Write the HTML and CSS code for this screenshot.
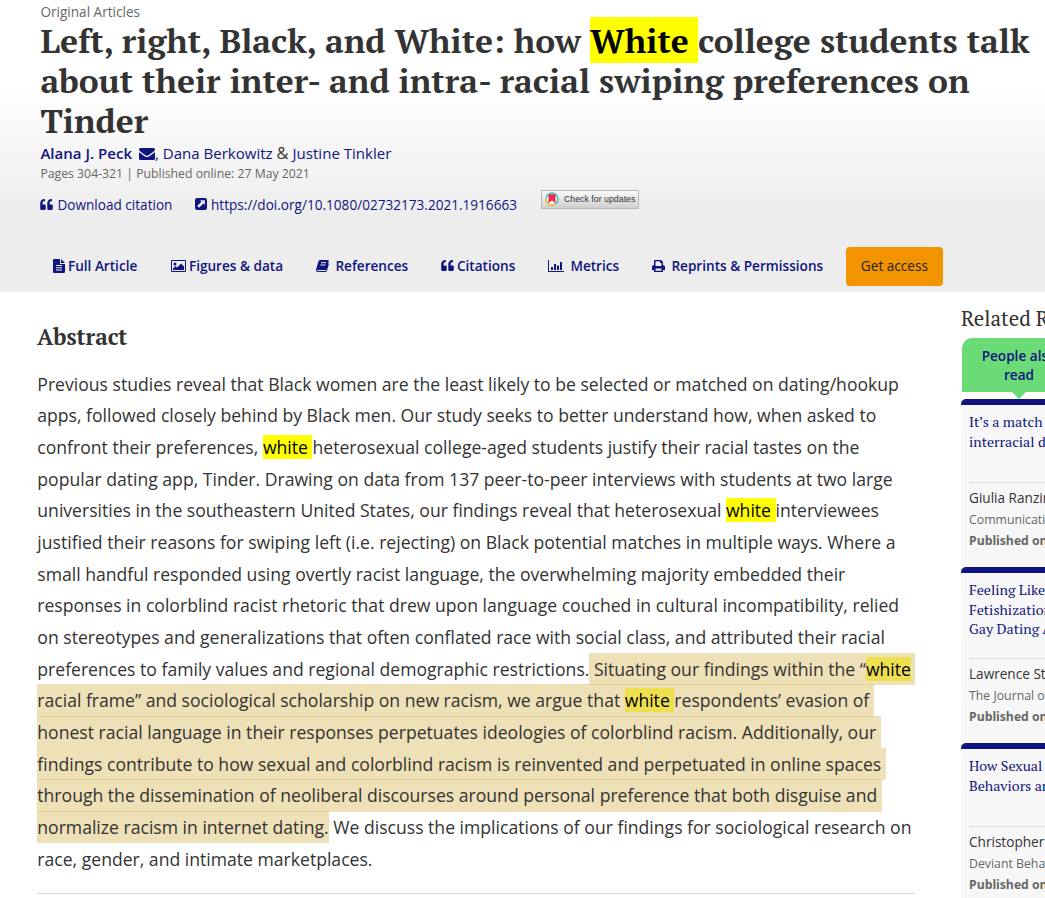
FILE: index.html
```html
<!DOCTYPE html>
<html lang="en">
  <head>
    <meta charset="utf-8">
    <title>Left, right, Black, and White</title>
    <link rel="stylesheet" href="styles.css">
  </head>
  <body>
  <svg class="sprite">
      <symbol id="quote" viewBox="0 32 512 448">
          <path d="M464 256h-80v-64c0-35.300 28.700-64 64-64h8c13.300 0 24-10.700 24-24V56c0-13.300-10.700-24-24-24h-8c-88.400 0-160 71.600-160 160v240c0 26.500 21.500 48 48 48h128c26.500 0 48-21.500 48-48V304c0-26.500-21.500-48-48-48zm-288 0H96v-64c0-35.300 28.700-64 64-64h8c13.300 0 24-10.700 24-24V56c0-13.300-10.700-24-24-24h-8C71.600 32 0 103.600 0 192v240c0 26.500 21.500 48 48 48h128c26.500 0 48-21.500 48-48V304c0-26.500-21.500-48-48-48z"/>
      </symbol>
  </svg>

  <div class="header">
      <div class="section">Original Articles</div>
      <h1 class="title">
          <span class="line">Left, right, Black, and White: how <mark>White </mark>college students talk</span>
          <span class="line">about their inter- and intra- racial swiping preferences on</span>
          <span class="line">Tinder</span>
      </h1>
      <div class="authors">
          <a class="main">Alana J. Peck</a>
          <svg class="mail" width="16" height="12" viewBox="0 0 16 12"><path d="M1.500 0h13Q16 0 16 1.500 16 2.600 14.500 3.700L9.500 7.200Q8 8.200 6.500 7.200L1.500 3.700Q0 2.600 0 1.500 0 0 1.500 0zM0 4.200l6 4.200q2 1.400 4 0l6-4.200v6.300q0 1.500-1.500 1.500h-13Q0 12 0 10.500z"/></svg><a>, Dana Berkowitz</a> <span class="amp">&amp;</span> <a>Justine Tinkler</a>
      </div>
      <div class="pages">Pages 304-321 | Published online: 27 May 2021</div>
      <div class="links">
          <a class="cite"><svg width="13" height="11"><use href="#quote"/></svg>Download citation</a>
          <a class="doi"><svg width="12" height="12" viewBox="0 0 12 12"><path fill-rule="evenodd" d="M2.200 0h7.600Q12 0 12 2.200v7.600q0 2.200-2.200 2.200H2.200Q0 12 0 9.800V2.200Q0 0 2.200 0zM5 2.300l1.400 1.400-4.200 4.200 1.900 1.900 4.200-4.200L9.800 7V2.300z"/></svg>https://doi.org/10.1080/02732173.2021.1916663</a>
          <div class="updates">
              <svg width="14" height="14" viewBox="0 0 14 14"><circle class="ring-blue" cx="7" cy="7" r="6"/><path class="ring-yellow" d="M1 6.500A6 6 0 0 0 10.500 11.900"/><path class="ribbon" d="M3.500 2.300h7v8.900L7 8.600l-3.500 2.600z"/></svg>
              <span>Check for updates</span>
          </div>
      </div>
      <div class="tabs">
          <a><svg width="12" height="14" viewBox="0 0 12 14"><path fill-rule="evenodd" d="M1 0h6v5h5v8q0 1-1 1H1q-1 0-1-1V1q0-1 1-1zM8 0l4 4H8zM3 6v1h6V6zM3 8.200v1h6v-1zM3 10.400v1h6v-1z"/></svg>Full Article</a>
          <a><svg width="15" height="12" viewBox="0 0 15 12"><path fill-rule="evenodd" d="M1 0h13q1 0 1 1v10q0 1-1 1H1q-1 0-1-1V1q0-1 1-1zM1 1v10h13V1z"/><circle cx="4" cy="4" r="1.500"/><path d="M2 10V8.500L4.500 6 6 7.500l4-4 3 3V10z"/></svg>Figures &amp; data</a>
          <a><svg class="wide" width="13" height="12" viewBox="0 0 13 12"><path d="M4.200 0h7.600q1.200 0 .9 1.200L10.500 9q-.3 1-1.500 1H2q-.8 0-.8.500t.8.500h7.700L12 3.500h1L10.800 11q-.3 1-1.500 1H1.800Q-.3 12 .1 9.500L2.500 1.300Q3 0 4.200 0z"/><path class="cut" d="M5 2.700h5M4.400 5h5"/></svg>References</a>
          <a><svg width="13" height="11"><use href="#quote"/></svg>Citations</a>
          <a><svg class="bars" width="16" height="12" viewBox="0 0 16 12"><path d="M0 0h1v11h15v1H0zM3 7h2v3H3zM6 4h2v6H6zM9 5.500h2V10H9zM12 2h2v8h-2z"/></svg>Metrics</a>
          <a><svg class="print" width="13" height="12" viewBox="0 0 13 12"><path fill-rule="evenodd" d="M2.500 0h6.500l2 2v3q2 0 2 2v3h-2v2H2v-2H0V7q0-2 2-2V.5zM3.500 1.200V6h6V3H8V1.200zM3.500 8.500v2.200h6V8.500z"/></svg>Reprints &amp; Permissions</a>
          <a class="access">Get access</a>
      </div>
  </div>

  <div class="content">
      <div class="abstract">
          <h2>Abstract</h2>
          <p>
              <span class="line">Previous studies reveal that Black women are the least likely to be selected or matched on dating/hookup</span>
              <span class="line">apps, followed closely behind by Black men. Our study seeks to better understand how, when asked to</span>
              <span class="line">confront their preferences, <mark>white </mark>heterosexual college-aged students justify their racial tastes on the</span>
              <span class="line">popular dating app, Tinder. Drawing on data from 137 peer-to-peer interviews with students at two large</span>
              <span class="line">universities in the southeastern United States, our findings reveal that heterosexual <mark>white </mark>interviewees</span>
              <span class="line">justified their reasons for swiping left (i.e. rejecting) on Black potential matches in multiple ways. Where a</span>
              <span class="line">small handful responded using overtly racist language, the overwhelming majority embedded their</span>
              <span class="line">responses in colorblind racist rhetoric that drew upon language couched in cultural incompatibility, relied</span>
              <span class="line">on stereotypes and generalizations that often conflated race with social class, and attributed their racial</span>
              <span class="line">preferences to family values and regional demographic restrictions.<span class="hl"> Situating our findings within the “<mark>white</mark> </span></span>
              <span class="line"><span class="hl">racial frame” and sociological scholarship on new racism, we argue that <mark>white </mark>respondents’ evasion of </span></span>
              <span class="line"><span class="hl">honest racial language in their responses perpetuates ideologies of colorblind racism. Additionally, our </span></span>
              <span class="line"><span class="hl">findings contribute to how sexual and colorblind racism is reinvented and perpetuated in online spaces </span></span>
              <span class="line"><span class="hl">through the dissemination of neoliberal discourses around personal preference that both disguise and </span></span>
              <span class="line"><span class="hl">normalize racism in internet dating.</span> We discuss the implications of our findings for sociological research on</span>
              <span class="line">race, gender, and intimate marketplaces.</span>
          </p>
      </div>

      <div class="related">
          <h3>Related Research</h3>
          <div class="tab">People also read</div>
          <div class="card">
              <div class="name">It’s a match<br>interracial dating</div>
              <div class="by">Giulia Ranzini</div>
              <div class="journal">Communication</div>
              <div class="date">Published online</div>
          </div>
          <div class="card tall">
              <div class="name">Feeling Like<br>Fetishization<br>Gay Dating Apps</div>
              <div class="by">Lawrence Stacey</div>
              <div class="journal">The Journal of</div>
              <div class="date">Published online</div>
          </div>
          <div class="card">
              <div class="name">How Sexual<br>Behaviors and</div>
              <div class="by">Christopher</div>
              <div class="journal">Deviant Behavior</div>
              <div class="date">Published online</div>
          </div>
      </div>
  </div>
  </body>
</html>
```
FILE: styles.css
```css
* {
    box-sizing: border-box;
}

body {
    margin: 0;
    height: 898px;
    overflow: hidden;
    background: white;
    color: #333;
    font-family: "Open Sans", sans-serif;
}

.sprite {
    display: none;
}

svg {
    fill: #10147e;
    flex: none;
}

a {
    color: #10147e;
}

mark {
    background: #ff0;
    color: black;
}

.line {
    display: block;
    white-space: pre;
}

.header {
    height: 292px;
    padding: 2px 0 0 40.400px;
    background: linear-gradient(white 85px, #ededed 215px);
}

.section {
    font-size: 13.600px;
    line-height: 20px;
    color: #666;
}

.title {
    margin: -1px 0 1px;
    font-family: "PT Serif", "Liberation Serif", serif;
    font-size: 33.570px;
    line-height: 40px;
    font-weight: bold;
}

.title mark {
    padding-top: 1px;
}

.authors {
    height: 22px;
    line-height: 22px;
    font-size: 15.050px;
    white-space: nowrap;
}

.authors .main {
    font-weight: 600;
    margin-right: 3px;
}

.amp {
    font-size: 16.500px;
}

.mail {
    vertical-align: -1px;
}

.pages {
    font-size: 12.250px;
    line-height: 19px;
    color: #666;
}

.links {
    display: flex;
    align-items: center;
    height: 24px;
    margin-top: 9px;
    font-size: 13.600px;
}

.links a {
    display: flex;
    align-items: center;
    gap: 4px;
    white-space: nowrap;
}

.cite {
    width: 154.600px;
}

.doi {
    width: 346px;
}

.updates {
    display: flex;
    align-items: center;
    gap: 5px;
    width: 98px;
    height: 19px;
    margin-top: -10px;
    padding-left: 3px;
    border: 1px solid #b9b9b9;
    background: linear-gradient(#fafafa, #cfcfcf);
    font: 8.800px "Liberation Sans", sans-serif;
    white-space: nowrap;
}

.ring-blue {
    fill: #f4f4f4;
    stroke: #4db6cc;
    stroke-width: 1.500;
}

.ring-yellow {
    fill: none;
    stroke: #f3c63c;
    stroke-width: 1.500;
}

.ribbon {
    fill: #e52f45;
}

.tabs {
    display: grid;
    grid-template-columns: 118px 145px 125px 107px 104px 194px 97px;
    align-items: center;
    height: 39px;
    margin: 31px 0 0 12.500px;
    font-size: 13.600px;
    font-weight: 600;
}

.tabs a {
    display: flex;
    align-items: center;
    gap: 3px;
    padding-bottom: 2px;
    white-space: nowrap;
}

.tabs .wide,
.tabs .bars,
.tabs .print {
    margin-right: 3.500px;
}

.cut {
    stroke: #ededed;
    stroke-width: 1;
}

.tabs .access {
    justify-content: center;
    height: 39px;
    border-radius: 4px;
    background: #f29400;
    color: #222;
    font-weight: normal;
}

.content {
    display: flex;
    padding-left: 37px;
    overflow: hidden;
}

.abstract {
    flex: none;
    width: 878px;
    height: 602px;
    border-bottom: 1px solid #ddd;
}

.abstract h2 {
    margin: 30px 0 0;
    font-family: "PT Serif", "Liberation Serif", serif;
    font-size: 22.400px;
    line-height: 30px;
}

.abstract p {
    margin: 16.500px 0 0 0.300px;
    font-size: 17.600px;
    line-height: 31.680px;
}

.hl {
    padding: 4.200px 0;
    background: rgba(217, 186, 95, 0.45);
}

.hl mark {
    background: #eedf4f;
}

.related {
    flex: none;
    width: 170px;
    margin: 12px 0 0 46px;
}

.related h3 {
    margin: 0;
    font-family: "PT Serif", "Liberation Serif", serif;
    font-size: 20.800px;
    line-height: 28px;
    font-weight: normal;
    white-space: nowrap;
}

.tab {
    position: relative;
    width: 114px;
    height: 54px;
    margin: 6px 0 7px 1px;
    padding: 8px 10px;
    border-radius: 10px 10px 0 0;
    background: #6bdb77;
    color: #10147e;
    font-size: 13.600px;
    line-height: 19px;
    font-weight: 600;
    text-align: center;
}

.tab:after {
    content: "";
    position: absolute;
    left: 50%;
    top: 100%;
    margin-left: -7px;
    border: 7px solid transparent;
    border-top-color: #6bdb77;
    border-bottom: 0;
}

.card {
    height: 168px;
    padding: 0 8px;
    border-top: 6px solid #10147e;
    border-radius: 5px 0 0 0;
    background: #f7f7f7;
    white-space: nowrap;
}

.card.tall {
    height: 176px;
}

.name {
    height: 78px;
    padding-top: 7px;
    border-bottom: 1px solid #ddd;
    color: #10147e;
    font-family: "PT Serif", "Liberation Serif", serif;
    font-size: 14.200px;
    line-height: 19.500px;
}

.tall .name {
    height: 86px;
}

.by {
    margin-top: 5px;
    font-size: 13.600px;
    line-height: 20px;
}

.journal {
    font-size: 12.300px;
    line-height: 23px;
    color: #666;
}

.date {
    font-size: 12.200px;
    line-height: 19px;
    font-weight: bold;
    color: #666;
}
```
